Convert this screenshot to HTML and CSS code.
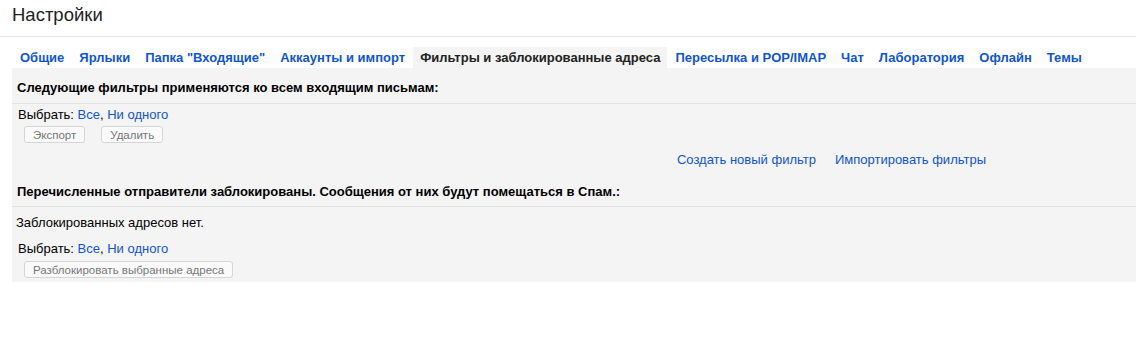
FILE: index.html
```html
<!DOCTYPE html>
<html lang="ru">
<head>
  <meta charset="UTF-8" />
  <title>Настройки</title>
  <link rel="stylesheet" href="styles.css">
</head>
<body>
  <div class="header">
    <h1>Настройки</h1>
  </div>

  <div class="tabs">
    <a class="tab" href="#">Общие</a>
    <a class="tab" href="#">Ярлыки</a>
    <a class="tab" href="#">Папка "Входящие"</a>
    <a class="tab" href="#">Аккаунты и импорт</a>
    <a class="tab active" href="#">Фильтры и заблокированные адреса</a>
    <a class="tab" href="#">Пересылка и POP/IMAP</a>
    <a class="tab" href="#">Чат</a>
    <a class="tab" href="#">Лаборатория</a>
    <a class="tab" href="#">Офлайн</a>
    <a class="tab" href="#">Темы</a>
  </div>

  <div class="panel">
    <div class="section-title">Следующие фильтры применяются ко всем входящим письмам:</div>
    <div class="select-row">Выбрать: <a href="#">Все</a>, <a href="#">Ни одного</a></div>
    <div class="btn-group">
      <button>Экспорт</button>
      <button>Удалить</button>
    </div>
    <div class="filter-links">
      <a href="#">Создать новый фильтр</a>
      <a href="#">Импортировать фильтры</a>
    </div>

    <div class="section-title second">Перечисленные отправители заблокированы. Сообщения от них будут помещаться в Спам.:</div>
    <div class="empty">Заблокированных адресов нет.</div>
    <div class="select-row lower">Выбрать: <a href="#">Все</a>, <a href="#">Ни одного</a></div>
    <div class="btn-group last">
      <button>Разблокировать выбранные адреса</button>
    </div>
  </div>
</body>
</html>
```

FILE: styles.css
```css
body {
  margin: 0;
  font-family: "Liberation Sans", Arial, sans-serif;
  font-size: 13px;
  color: #222;
  background: #fff;
}

a {
  color: #15c;
  text-decoration: none;
}

.header {
  height: 36px;
  border-bottom: 1px solid #e5e5e5;
  padding: 0 12px;
}

h1 {
  margin: 0;
  font-size: 18.5px;
  font-weight: normal;
  line-height: 30px;
  color: #222;
}

.tabs {
  display: flex;
  margin: 10px 0 0 12px;
}

.tab {
  padding: 0 7px;
  margin-right: 1px;
  height: 21px;
  line-height: 21px;
  font-weight: bold;
}

.tab:first-child {
  padding-left: 8px;
}

.tab.active {
  background: #f4f4f4;
  color: #222;
}

.panel {
  margin-left: 12px;
  background: #f4f4f4;
  height: 214px;
}

.section-title {
  padding: 12px 5px 8px;
  line-height: 15px;
  font-weight: bold;
  color: #000;
  border-bottom: 1px solid #e2e2e2;
}

.section-title.second {
  padding: 17px 5px 7px;
}

.select-row {
  padding: 3px 6px 0;
  line-height: 15px;
  color: #000;
}

.select-row.lower {
  padding-top: 11px;
}

.btn-group {
  display: flex;
  gap: 16px;
  padding: 4px 12px 0;
}

.btn-group.last {
  padding-top: 5px;
}

button {
  height: 17px;
  padding: 0 8px;
  font-family: inherit;
  font-size: 11.5px;
  color: #777;
  background: #fafafa;
  border: 1px solid #d6d6d6;
  border-radius: 3px;
}

.filter-links {
  display: flex;
  justify-content: flex-end;
  gap: 19px;
  padding: 9px 150px 0 0;
  line-height: 15px;
}

.empty {
  padding: 8px 4px 0;
  line-height: 15px;
  color: #000;
}
```
